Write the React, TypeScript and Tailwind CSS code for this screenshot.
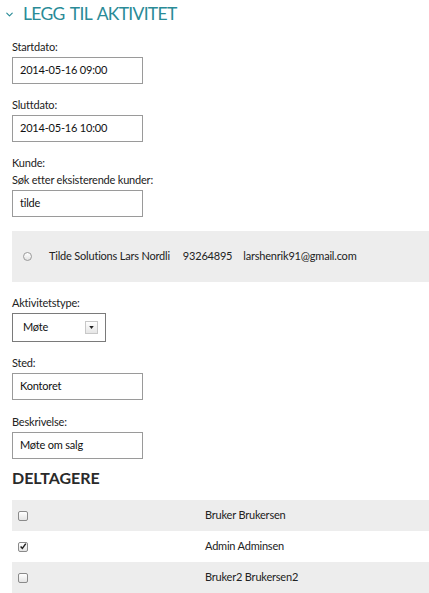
import {ChevronDown} from 'lucide-react';

const fields = [
  {label: 'Startdato:', value: '2014-05-16 09:00'},
  {label: 'Sluttdato:', value: '2014-05-16 10:00'},
];

const participants = [
  {name: 'Bruker Brukersen', checked: false},
  {name: 'Admin Adminsen', checked: true},
  {name: 'Bruker2 Brukersen2', checked: false},
];

const TextBox = ({value}: {value: string}) => (
  <div className="w-[131px] h-[27px] border border-[#9a9a9a] bg-white flex items-center px-[7px] text-[#111]">
    {value}
  </div>
);

const Label = ({children}: {children: string}) => (
  <div className="h-[17px] leading-[17px] text-[#222]">{children}</div>
);

const Checkbox = ({checked}: {checked: boolean}) => (
  <span className="w-[10px] h-[10px] rounded-[2px] border border-[#8a8a8a] bg-gradient-to-b from-white to-[#e4e4e4] flex items-center justify-center">
    {checked && (
      <svg viewBox="0 0 10 10" className="w-[9px] h-[9px]">
        <path d="M2 5 L4.2 7.4 L8.5 1.5" stroke="#222" strokeWidth="1.8" fill="none" />
      </svg>
    )}
  </span>
);

const App = () => {
  return (
    <main className="w-[429px] h-[593px] overflow-hidden bg-white font-['Lato',sans-serif] text-[11px] tracking-[-0.2px]">
      <header className="h-[28px] flex items-center pl-[4px] gap-[8px] text-[#2a8b97]">
        <ChevronDown size={11} strokeWidth={2.5} />
        <h1 className="text-[17.5px] leading-none tracking-[-0.7px] [word-spacing:2px]">LEGG TIL AKTIVITET</h1>
      </header>

      <div className="pl-[12px]">
        {fields.map((f, i) => (
          <div key={f.label} className={i === 0 ? 'pt-[10px]' : 'pt-[12px]'}>
            <Label>{f.label}</Label>
            <div className="mt-[2px]">
              <TextBox value={f.value} />
            </div>
          </div>
        ))}

        <div className="pt-[12px]">
          <Label>Kunde:</Label>
          <Label>Søk etter eksisterende kunder:</Label>
          <div className="mt-[2px]">
            <TextBox value="tilde" />
          </div>
        </div>

        <div className="mt-[14px] h-[51px] bg-[#ededed] flex items-center pl-[11px] text-[#222]">
          <span className="w-[9px] h-[9px] rounded-full border border-[#9a9a9a] bg-gradient-to-b from-white to-[#e2e2e2]" />
          <span className="ml-[17px]">Tilde Solutions Lars Nordli</span>
          <span className="ml-[13px]">93264895</span>
          <span className="ml-[11px]">larshenrik91@gmail.com</span>
        </div>

        <div className="pt-[12px]">
          <Label>Aktivitetstype:</Label>
          <div className="mt-[2px] w-[94px] h-[29px] border border-[#7a7a7a] bg-white flex items-center pl-[10px] pr-[7px] text-[#111]">
            <span className="flex-1">Møte</span>
            <span className="w-[13px] h-[13px] border border-[#c8c8c8] bg-gradient-to-b from-white to-[#e6e6e6] flex items-center justify-center">
              <svg viewBox="0 0 6 4" className="w-[5px] h-[3px]">
                <path d="M0 0 H6 L3 4 Z" fill="#222" />
              </svg>
            </span>
          </div>
        </div>

        <div className="pt-[12px]">
          <Label>Sted:</Label>
          <div className="mt-[2px]">
            <TextBox value="Kontoret" />
          </div>
        </div>

        <div className="pt-[13px]">
          <Label>Beskrivelse:</Label>
          <div className="mt-[2px]">
            <TextBox value="Møte om salg" />
          </div>
        </div>

        <h2 className="mt-[9px] h-[20px] leading-[20px] text-[16px] font-bold text-[#2a2a2a] tracking-[0px]">
          DELTAGERE
        </h2>

        <div className="mt-[12px]">
          {participants.map((p, i) => (
            <div
              key={p.name}
              className={`h-[31px] grid grid-cols-[193px_1fr] items-center text-[#222] ${i % 2 === 0 ? 'bg-[#ededed]' : 'bg-white'}`}
            >
              <div className="pl-[6px]">
                <Checkbox checked={p.checked} />
              </div>
              <div>{p.name}</div>
            </div>
          ))}
        </div>
      </div>
    </main>
  );
};

export default App;
